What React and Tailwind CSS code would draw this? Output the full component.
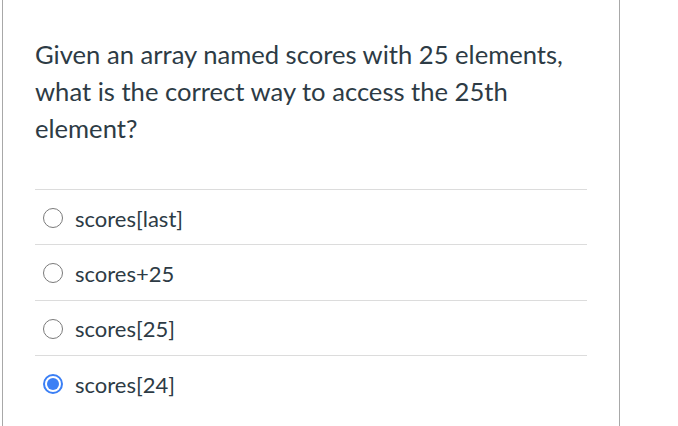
const options = [
  { id: 'a', label: 'scores[last]', checked: false },
  { id: 'b', label: 'scores+25', checked: false },
  { id: 'c', label: 'scores[25]', checked: false },
  { id: 'd', label: 'scores[24]', checked: true },
];

const Radio = ({ checked }) => {
  if (checked) {
    return (
      <span className="flex h-[20px] w-[20px] items-center justify-center rounded-full border-2 border-[#3b7ff5] bg-white">
        <span className="h-[12px] w-[12px] rounded-full bg-[#3b7ff5]" />
      </span>
    );
  }
  return <span className="h-[20px] w-[20px] rounded-full border-[1.5px] border-[#7a7a7a] bg-white" />;
};

const App = () => {
  return (
    <div className="h-[426px] w-[678px] bg-white font-['Lato','Liberation_Sans',sans-serif] text-[#2d3b45]">
      <div className="ml-[2px] h-full w-[618px] border-x border-[#a8a8a8] pl-[32px] pr-[32px] pt-[36px]">
        <p className="text-[25.6px] leading-[37px]">
          Given an array named scores with 25 elements, what is the correct way to access the 25th element?
        </p>
        <ul className="mt-[42px] w-[552px]">
          {options.map((opt) => (
            <li key={opt.id} className="flex h-[55.3px] items-center gap-[12px] border-t border-[#dcdcdc] pl-[8px] pt-[2px] text-[22px]">
              <Radio checked={opt.checked} />
              <span>{opt.label}</span>
            </li>
          ))}
        </ul>
      </div>
    </div>
  );
};

export default App;
